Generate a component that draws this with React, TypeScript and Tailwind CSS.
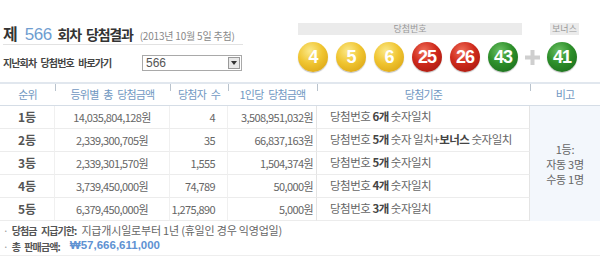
import React from 'react';

const kr = "font-['Noto_Sans_CJK_KR','Noto_Sans',sans-serif]";

type Ball = { n: number; color: 'y' | 'r' | 'g' };

const balls: Ball[] = [
  { n: 4, color: 'y' },
  { n: 5, color: 'y' },
  { n: 6, color: 'y' },
  { n: 25, color: 'r' },
  { n: 26, color: 'r' },
  { n: 43, color: 'g' },
];

const ballBg = {
  y: 'bg-[radial-gradient(circle_at_40%_30%,#fbe98a_0%,#f0c531_45%,#d59c0c_100%)]',
  r: 'bg-[radial-gradient(circle_at_40%_30%,#f0705a_0%,#cf2a1c_45%,#9c140c_100%)]',
  g: 'bg-[radial-gradient(circle_at_40%_30%,#6cc064_0%,#2d8f2a_45%,#17641a_100%)]',
};

function LottoBall({ n, color }: Ball) {
  return (
    <div
      className={`w-[30px] h-[30px] rounded-full flex items-center justify-center text-white text-[18px] font-bold tracking-tighter font-['Liberation_Sans',sans-serif] shadow-[0_1px_1px_rgba(0,0,0,0.25)] ${ballBg[color]}`}
    >
      {n}
    </div>
  );
}

const rows = [
  { rank: '1등', total: '14,035,804,128원', count: '4', per: '3,508,951,032원', match: '6개', rest: '숫자일치' },
  { rank: '2등', total: '2,339,300,705원', count: '35', per: '66,837,163원', match: '5개', rest: '숫자 일치+', bonus: true },
  { rank: '3등', total: '2,339,301,570원', count: '1,555', per: '1,504,374원', match: '5개', rest: '숫자일치' },
  { rank: '4등', total: '3,739,450,000원', count: '74,789', per: '50,000원', match: '4개', rest: '숫자일치' },
  { rank: '5등', total: '6,379,450,000원', count: '1,275,890', per: '5,000원', match: '3개', rest: '숫자일치' },
];

function HeadCell({ label, tick }: { label: string; tick?: boolean }) {
  return (
    <div className="relative h-[22px] flex items-center justify-center text-[11px] tracking-[-0.8px] [word-spacing:3px] text-[#7198c2] border-b border-[#d5dde6]">
      {tick && <span className="absolute left-0 top-0 w-px h-[7px] bg-[#b9c3cd]" />}
      {label}
    </div>
  );
}

const cell = 'h-[23px] flex items-center border-b border-[#ececec] border-r whitespace-nowrap';

function App() {
  return (
    <div className={`w-[600px] h-[256px] bg-white overflow-hidden text-[#666] ${kr}`}>
      <div className="flex h-[82px]">
        <div className="w-[245px] pl-[3px] pt-[21px]">
          <div className="flex items-baseline h-[20px] whitespace-nowrap">
            <span className="text-[16px] font-bold text-[#333]">제</span>
            <span className="ml-[7px] text-[17px] tracking-[-0.5px] text-[#6f9dd0] font-['Liberation_Sans',sans-serif]">566</span>
            <span className="ml-[6px] text-[14px] tracking-[-1.2px] [word-spacing:3px] font-bold text-[#333]">회차 당첨결과</span>
            <span className="ml-[7px] text-[10px] tracking-[-0.2px] text-[#888]">(2013년 10월 5일 추첨)</span>
          </div>
          <div className="mt-[3px] h-px w-[240px] bg-[#e2e2e2]" />
          <div className="mt-[9px] flex items-center h-[17px]">
            <span className="w-[139px] text-[10px] tracking-[-0.9px] [word-spacing:3px] font-bold text-[#444] whitespace-nowrap">지난회차 당첨번호 바로가기</span>
            <div className="w-[100px] h-[16px] border border-[#a9a9a9] flex items-center justify-between pl-[3px] pr-[1px]">
              <span className="text-[12px] text-[#555] font-['Liberation_Sans',sans-serif]">566</span>
              <span className="w-[12px] h-[12px] border border-[#999] bg-[#e8e8e8] flex items-center justify-center">
                <svg width="6" height="4" viewBox="0 0 6 4"><path d="M0 0h6L3 4z" fill="#333" /></svg>
              </span>
            </div>
          </div>
        </div>
        <div className="pl-[53px] pt-[23px]">
          <div className="flex gap-[28px]">
            <div className="w-[224px] h-[12px] bg-[#ebebeb] flex items-center justify-center text-[9px] text-[#999]">당첨번호</div>
            <div className="w-[29px] h-[12px] bg-[#ebebeb] flex items-center justify-center text-[9px] text-[#999]">보너스</div>
          </div>
          <div className="mt-[7px] flex items-center">
            <div className="flex gap-[8px]">
              {balls.map((b) => (
                <LottoBall key={b.n} {...b} />
              ))}
            </div>
            <div className="w-[29px] flex items-center justify-center">
              <svg width="15" height="15" viewBox="0 0 15 15">
                <path d="M5.5 0h4v5.5H15v4H9.5V15h-4V9.5H0v-4h5.5z" fill="#cfcfcf" />
              </svg>
            </div>
            <LottoBall n={41} color="g" />
          </div>
        </div>
      </div>

      <div className="grid grid-cols-[55px_115px_58px_89px_213px_70px] border-t-2 border-[#e1e7ee]">
        <HeadCell label="순위" />
        <HeadCell label="등위별 총 당첨금액" tick />
        <HeadCell label="당첨자 수" tick />
        <HeadCell label="1인당 당첨금액" tick />
        <HeadCell label="당첨기준" tick />
        <HeadCell label="비고" tick />

        {rows.map((r, i) => (
          <React.Fragment key={r.rank}>
            <div className={`${cell} justify-center text-[12px] font-bold text-[#555] border-r-[#f0f0f0]`}>{r.rank}</div>
            <div className={`${cell} justify-center text-[11px] tracking-[-0.6px] border-r-[#f0f0f0]`}>{r.total}</div>
            <div className={`${cell} justify-end pr-[12px] text-[11px] tracking-[-0.6px] border-r-[#f0f0f0]`}>{r.count}</div>
            <div className={`${cell} justify-end pr-[3px] text-[11px] tracking-[-0.6px] border-r-[#e4e4e4]`}>{r.per}</div>
            <div className={`${cell} pl-[13px] text-[11.5px] tracking-[-0.5px] border-r-[#e4e4e4]`}>
              <span>
                당첨번호 <b className="text-[#444]">{r.match}</b> {r.rest}
                {r.bonus && (
                  <>
                    <b className="text-[#444]">보너스</b> 숫자일치
                  </>
                )}
              </span>
            </div>
            {i === 0 && (
              <div className="row-span-5 bg-[#f3f7fc] flex flex-col items-center justify-center text-[11px] leading-[15px] tracking-[-0.3px] pt-[2px]">
                <span>1등:</span>
                <span>자동 3명</span>
                <span>수동 1명</span>
              </div>
            )}
          </React.Fragment>
        ))}
      </div>

      <div className="pl-[3px] pt-[1px]">
        <div className="flex items-center h-[16px] whitespace-nowrap">
          <span className="text-[10px] text-[#999] mr-[3px]">·</span>
          <span className="text-[10px] tracking-[-0.9px] [word-spacing:3px] font-bold text-[#555]">당첨금 지급기한:</span>
          <span className="ml-[5px] text-[11px] text-[#666] tracking-[-0.2px]">지급개시일로부터 1년 (휴일인 경우 익영업일)</span>
        </div>
        <div className="flex items-center h-[16px] whitespace-nowrap">
          <span className="text-[10px] text-[#999] mr-[3px]">·</span>
          <span className="text-[10px] tracking-[-0.9px] [word-spacing:3px] font-bold text-[#555]">총 판매금액:</span>
          <span className="ml-[10px] text-[11.5px] font-bold text-[#5f92d2] font-['Liberation_Sans',sans-serif]">₩57,666,611,000</span>
        </div>
      </div>
      <div className="mt-[1px] h-[3px] bg-[#eeeeee]" />
    </div>
  );
}

export default App;
